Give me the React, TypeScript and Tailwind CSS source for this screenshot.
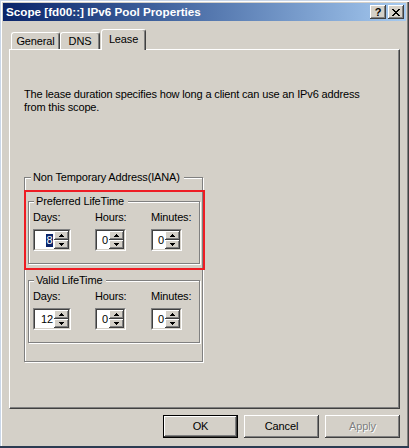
import React from "react";

const raised =
  "bg-[#d4d0c8] shadow-[inset_-1px_-1px_0_#404040,inset_1px_1px_0_#ffffff,inset_-2px_-2px_0_#808080]";

function Arrow({ up }: { up: boolean }) {
  return (
    <svg width="5" height="3" viewBox="0 0 5 3" className="block" shapeRendering="crispEdges">
      {up ? (
        <>
          <rect x="2" y="0" width="1" height="1" fill="#000" />
          <rect x="1" y="1" width="3" height="1" fill="#000" />
          <rect x="0" y="2" width="5" height="1" fill="#000" />
        </>
      ) : (
        <>
          <rect x="0" y="0" width="5" height="1" fill="#000" />
          <rect x="1" y="1" width="3" height="1" fill="#000" />
          <rect x="2" y="2" width="1" height="1" fill="#000" />
        </>
      )}
    </svg>
  );
}

function Spin({ value, wide, selected }: { value: string; wide?: boolean; selected?: boolean }) {
  return (
    <div
      className={`${wide ? "w-[38px]" : "w-[31px]"} h-[22px] border border-t-[#808080] border-l-[#808080] border-r-white border-b-white`}
    >
      <div className="h-full border border-t-[#404040] border-l-[#404040] border-r-[#d4d0c8] border-b-[#d4d0c8] bg-white flex">
        <div className="flex-1 flex items-center justify-end pr-[1px]">
          {selected ? (
            <span className="bg-[#0a246a] text-white leading-[13px] px-[0.5px]">{value}</span>
          ) : (
            <span className="leading-[13px]">{value}</span>
          )}
        </div>
        <div className="w-[15px] flex flex-col">
          <div className={`h-[9px] ${raised} flex items-center justify-center`}>
            <Arrow up />
          </div>
          <div className={`h-[9px] ${raised} flex items-center justify-center`}>
            <Arrow up={false} />
          </div>
        </div>
      </div>
    </div>
  );
}

function Legend({ children, left }: { children: React.ReactNode; left: string }) {
  return (
    <span className={`absolute -top-[7px] ${left} bg-[#d4d0c8] pl-[2px] pr-[4px] leading-[13px] whitespace-nowrap`}>
      {children}
    </span>
  );
}

function TimeGroup({ title, days, selected }: { title: string; days: string; selected?: boolean }) {
  return (
    <div className="relative w-[172px] h-[63px] border border-[#808080] shadow-[inset_1px_1px_0_#ffffff,1px_1px_0_#ffffff] pl-[4px] pt-[9px]">
      <Legend left="left-[5px]">{title}</Legend>
      <div className="flex">
        <div className="w-[62px] flex flex-col gap-[5px]">
          <span className="leading-[13px]">Days:</span>
          <Spin value={days} wide selected={selected} />
        </div>
        <div className="w-[56px] flex flex-col gap-[5px]">
          <span className="leading-[13px]">Hours:</span>
          <Spin value="0" />
        </div>
        <div className="flex flex-col gap-[5px]">
          <span className="leading-[13px]">Minutes:</span>
          <Spin value="0" />
        </div>
      </div>
    </div>
  );
}

function Tab({ label, w }: { label: string; w: string }) {
  return (
    <div
      className={`${w} h-[17px] rounded-t-[3px] border-t border-l border-white border-r border-r-[#404040] shadow-[inset_-1px_0_0_#808080] flex justify-center pt-[2px] leading-[13px]`}
    >
      {label}
    </div>
  );
}

function Btn({ children, def, disabled }: { children: React.ReactNode; def?: boolean; disabled?: boolean }) {
  return (
    <div
      className={`w-[75px] h-[23px] ${raised} ${def ? "border border-black" : ""} flex items-center justify-center leading-[13px] ${
        disabled ? "text-[#808080] [text-shadow:1px_1px_0_#ffffff]" : ""
      }`}
    >
      {children}
    </div>
  );
}

export default function App() {
  return (
    <div className="w-[409px] h-[448px] overflow-hidden bg-[#d4d0c8] font-['Liberation_Sans',Arial,sans-serif] text-[11px] tracking-[-0.15px] text-black leading-[13px] flex flex-col pt-[3px] px-[3px] border-b-2 border-b-[#2b3b52] shadow-[inset_1px_1px_0_#c9d6e8,inset_2px_2px_0_#ffffff,inset_-1px_0_0_#404040,inset_-2px_0_0_#808080]">
      {/* Title bar */}
      <div className="h-[18px] shrink-0 flex items-center justify-between pl-[3px] pr-[2px] bg-linear-to-r from-[#0a246a] to-[#a6caf0]">
        <span className="text-white font-bold text-[11.7px] tracking-normal leading-[14px]">
          Scope [fd00::] IPv6 Pool Properties
        </span>
        <div className="flex gap-[2px]">
          <div className={`w-[16px] h-[14px] ${raised} flex items-center justify-center font-bold text-[11px] leading-[11px] tracking-normal`}>
            ?
          </div>
          <div className={`w-[16px] h-[14px] ${raised} flex items-center justify-center`}>
            <svg width="8" height="7" viewBox="0 0 8 7" shapeRendering="crispEdges">
              <path d="M0 0h2v1h-2zM6 0h2v1h-2zM1 1h2v1h-2zM5 1h2v1h-2zM2 2h4v1h-4zM3 3h2v1h-2zM2 4h4v1h-4zM1 5h2v1h-2zM5 5h2v1h-2zM0 6h2v1h-2zM6 6h2v1h-2z" fill="#000" />
            </svg>
          </div>
        </div>
      </div>

      <div className="px-[6px] flex flex-col">
        {/* Tabs */}
        <div className="mt-[8px] h-[20px] pl-[2px] flex items-end">
          <Tab label="General" w="w-[49px]" />
          <Tab label="DNS" w="w-[40px]" />
          <div className="relative z-10 ml-[1px] w-[45px] h-[21px] -mb-[1px] bg-[#d4d0c8] rounded-t-[3px] border-t border-l border-white border-r border-r-[#404040] shadow-[inset_-1px_0_0_#808080] flex justify-center pt-[3px] leading-[13px]">
            Lease
          </div>
        </div>

        {/* Panel */}
        <div className="h-[360px] border border-white border-r-[#404040] border-b-[#404040] shadow-[inset_-1px_-1px_0_#808080] pl-[14px] pt-[38px]">
          <p className="leading-[13px]">
            The lease duration specifies how long a client can use an IPv6 address
            <br />
            from this scope.
          </p>

          <div className="relative mt-[63px] w-[179px] border border-[#808080] shadow-[inset_1px_1px_0_#ffffff,1px_1px_0_#ffffff] pl-[3px] pr-[2px] pt-[23px] pb-[18px] flex flex-col gap-[16px]">
            <Legend left="left-[6px]">Non Temporary Address(IANA)</Legend>
            <TimeGroup title="Preferred LifeTime" days="8" selected />
            <TimeGroup title="Valid LifeTime" days="12" />
            <div className="absolute -left-[1px] top-[12px] w-[181px] h-[80px] border-2 border-[#ee1c24] pointer-events-none" />
          </div>
        </div>

        {/* Buttons */}
        <div className="mt-[6px] flex justify-end gap-[6px]">
          <Btn def>OK</Btn>
          <Btn>Cancel</Btn>
          <Btn disabled>Apply</Btn>
        </div>
      </div>
    </div>
  );
}
